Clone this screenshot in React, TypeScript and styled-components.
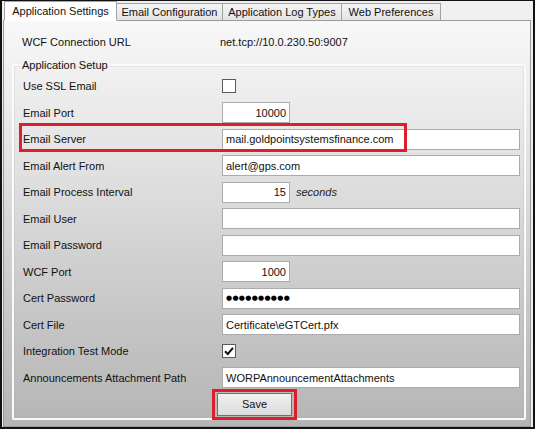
import React from "react";
import styled, { createGlobalStyle } from "styled-components";

const Global = createGlobalStyle`
  html, body { margin: 0; padding: 0; background: #fff; }
  body { font-family: "Liberation Sans", Arial, sans-serif; font-size: 11px; color: #1b1b1b; }
  * { box-sizing: border-box; }
`;

const Window = styled.div`
  width: 535px;
  height: 429px;
  border: 2px solid #111;
  border-top-width: 1px;
  background: #f0f0f0;
  display: flex;
  flex-direction: column;
`;

const TabStrip = styled.div`
  display: flex;
  align-items: flex-end;
  height: 23px;
  padding-left: 2px;
  position: relative;
  z-index: 1;
`;

const Tab = styled.div<{ $active?: boolean; $w: number }>`
  width: ${(p) => p.$w}px;
  height: ${(p) => (p.$active ? 20 : 17)}px;
  margin-right: -1px;
  border: 1px solid #a3a3a3;
  border-bottom: ${(p) => (p.$active ? "1px solid #fff" : "none")};
  background: ${(p) => (p.$active ? "#fff" : "linear-gradient(#f4f4f4, #e4e4e4)")};
  display: flex;
  align-items: center;
  justify-content: center;
  white-space: nowrap;
  color: #111;
  margin-bottom: ${(p) => (p.$active ? -1 : 0)}px;
  position: relative;
  z-index: ${(p) => (p.$active ? 2 : 1)};
`;

const Panel = styled.div`
  flex: 1;
  margin: 0 2px 2px 1px;
  border: 1px solid #9a9a9a;
  background: linear-gradient(#f8f8f8 0%, #e2e2e2 35%, #c8c8c8 70%, #b5b5b5 100%);
  display: flex;
  flex-direction: column;
  padding: 0 6px 6px 8px;
`;

const TopRow = styled.div`
  display: grid;
  grid-template-columns: 198px 1fr;
  height: 37px;
  align-items: center;
  padding-left: 10px;
  padding-top: 5px;
`;

const Fieldset = styled.fieldset`
  flex: 1;
  margin: 0;
  padding: 0 4px 0 9px;
  border: 2px solid #fbfbfb;
  border-radius: 2px;
  box-shadow: inset 0 0 0 1px rgba(150, 150, 150, 0.15);
`;

const Legend = styled.legend`
  padding: 0 1px;
  margin-left: -2px;
  line-height: 14px;
  color: #111;
`;

const Grid = styled.div`
  display: grid;
  grid-template-columns: 199px 1fr;
  grid-auto-rows: 26.5px;
  align-items: center;
  padding-top: 1px;
`;

const Label = styled.div`
  color: #111;
  white-space: nowrap;
`;

const Cell = styled.div`
  display: flex;
  align-items: center;
  gap: 6px;
`;

const Input = styled.div<{ $narrow?: boolean; $right?: boolean }>`
  width: ${(p) => (p.$narrow ? "68px" : "298px")};
  height: 21px;
  background: #fff;
  border: 1px solid #ababab;
  display: flex;
  align-items: center;
  justify-content: ${(p) => (p.$right ? "flex-end" : "flex-start")};
  padding: 0 3px;
  color: #111;
  white-space: nowrap;
  overflow: hidden;
`;

const Dots = styled.span`
  font-family: "DejaVu Sans", sans-serif;
  font-size: 7px;
  letter-spacing: 0.3px;
  color: #000;
`;

const Unit = styled.span`
  font-style: italic;
  color: #222;
`;

const Check = styled.div`
  width: 14px;
  height: 14px;
  border: 1px solid #5a5a5a;
  background: #fff;
  display: flex;
  align-items: center;
  justify-content: center;
`;

const Highlight = styled.div`
  position: absolute;
  border: 3px solid #dc1f2a;
  pointer-events: none;
`;

const RowWrap = styled.div`
  display: contents;
`;

const SaveRow = styled.div`
  grid-column: 2;
  position: relative;
  display: flex;
  align-items: center;
  height: 100%;
`;

const Button = styled.div`
  width: 75px;
  height: 23px;
  margin-left: -5px;
  border: 1px solid #707070;
  background: linear-gradient(#f0f0f0, #dcdcdc);
  display: flex;
  align-items: center;
  justify-content: center;
  color: #111;
  position: relative;
`;

const ServerLabel = styled.div`
  position: relative;
`;

const CheckMark = () => (
  <svg width="10" height="10" viewBox="0 0 10 10">
    <path d="M1 5.2 L3.8 8 L9 1.8" fill="none" stroke="#111" strokeWidth="2" />
  </svg>
);

type Row =
  | { label: string; kind: "check"; checked?: boolean }
  | { label: string; kind: "input"; value?: string; narrow?: boolean; right?: boolean; unit?: string; password?: boolean };

const rows: Row[] = [
  { label: "Use SSL Email", kind: "check" },
  { label: "Email Port", kind: "input", value: "10000", narrow: true, right: true },
  { label: "Email Server", kind: "input", value: "mail.goldpointsystemsfinance.com" },
  { label: "Email Alert From", kind: "input", value: "alert@gps.com" },
  { label: "Email Process Interval", kind: "input", value: "15", narrow: true, right: true, unit: "seconds" },
  { label: "Email User", kind: "input", value: "" },
  { label: "Email Password", kind: "input", value: "" },
  { label: "WCF Port", kind: "input", value: "1000", narrow: true, right: true },
  { label: "Cert Password", kind: "input", password: true },
  { label: "Cert File", kind: "input", value: "Certificate\\eGTCert.pfx" },
  { label: "Integration Test Mode", kind: "check", checked: true },
  { label: "Announcements Attachment Path", kind: "input", value: "WORPAnnouncementAttachments" },
];

const tabs = [
  { label: "Application Settings", w: 113 },
  { label: "Email Configuration", w: 107 },
  { label: "Application Log Types", w: 120 },
  { label: "Web Preferences", w: 100 },
];

export default function App() {
  return (
    <>
      <Global />
      <Window>
        <TabStrip>
          {tabs.map((t, i) => (
            <Tab key={t.label} $active={i === 0} $w={t.w}>
              {t.label}
            </Tab>
          ))}
        </TabStrip>
        <Panel>
          <TopRow>
            <Label>WCF Connection URL</Label>
            <Label>net.tcp://10.0.230.50:9007</Label>
          </TopRow>
          <Fieldset>
            <Legend>Application Setup</Legend>
            <Grid>
              {rows.map((r) => (
                <RowWrap key={r.label}>
                  {r.label === "Email Server" ? (
                    <ServerLabel>
                      <Label>{r.label}</Label>
                      <Highlight style={{ left: -4, top: -10, width: 388, height: 29 }} />
                    </ServerLabel>
                  ) : (
                    <Label>{r.label}</Label>
                  )}
                  <Cell>
                    {r.kind === "check" ? (
                      <Check>{r.checked ? <CheckMark /> : null}</Check>
                    ) : (
                      <>
                        <Input $narrow={r.narrow} $right={r.right}>
                          {r.password ? <Dots>●●●●●●●●●●</Dots> : r.value}
                        </Input>
                        {r.unit ? <Unit>{r.unit}</Unit> : null}
                      </>
                    )}
                  </Cell>
                </RowWrap>
              ))}
              <SaveRow>
                <Button>Save</Button>
                <Highlight style={{ left: -10, top: -2, width: 85, height: 31 }} />
              </SaveRow>
            </Grid>
          </Fieldset>
        </Panel>
      </Window>
    </>
  );
}
